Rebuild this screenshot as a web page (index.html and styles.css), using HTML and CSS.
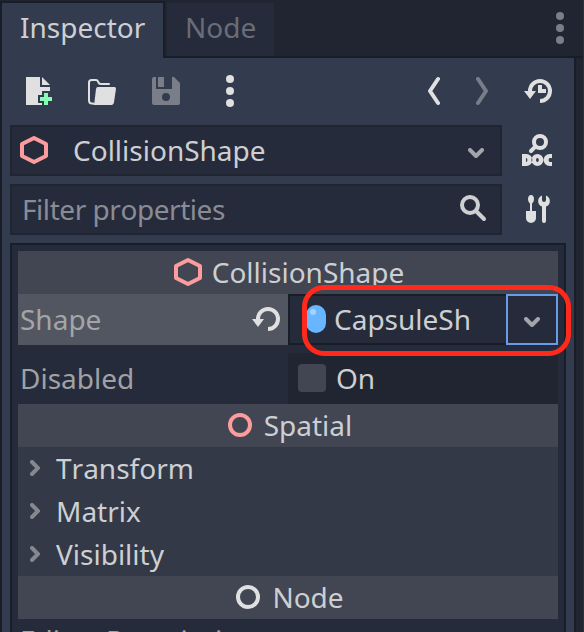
FILE: index.html
```html
<!DOCTYPE html>
<html lang="en">
<head>
<meta charset="utf-8">
<title>Inspector</title>
<link rel="stylesheet" href="styles.css">
</head>
<body>
<div class="dock">
  <header class="tabs">
    <div class="tab active">Inspector</div>
    <div class="tab">Node</div>
    <svg class="tabs-menu" viewBox="0 0 8 32"><circle cx="4" cy="4" r="4"/><circle cx="4" cy="16" r="4"/><circle cx="4" cy="28" r="4"/></svg>
  </header>
  <main class="panel">
    <div class="toolbar">
      <svg class="icon new" viewBox="0 0 16 16"><path d="M1 1h7v5h5v2H9v2H7v4h2v1H1zM9 1l4 4H9z"/><path class="plus" d="M10 9h2v2h2v2h-2v2h-2v-2H8v-2h2z"/></svg>
      <svg class="icon open" viewBox="0 0 16 16"><path class="line" d="M3.6 14.2H2.900Q1.500 14.200 1.500 12.600V3.800Q1.500 2.500 2.800 2.500H4.800Q5.800 2.500 6.100 3.400Q6.400 4.500 7.300 4.500H11.500"/><path d="M6 6h8.200q.9 0 .8.9l-1 6.700q-.2 1.400-1.600 1.400H3.200q.9-.3 1-1.300l.8-6.700q.1-1 1-1z"/></svg>
      <svg class="icon save" viewBox="0 0 16 16"><path fill-rule="evenodd" d="M2 1h1v6h8V1h1l3 3v10q0 1-1 1H2q-1 0-1-1V2q0-1 1-1zM8 9a2 2 0 1 0 0 4 2 2 0 0 0 0-4z"/><path d="M4 1h3v5H4z"/></svg>
      <svg class="dots" viewBox="0 0 8 32"><circle cx="4" cy="4" r="4"/><circle cx="4" cy="16" r="4"/><circle cx="4" cy="28" r="4"/></svg>
      <svg class="nav back" viewBox="0 0 12 32"><path d="M10 4 2 16l8 12"/></svg>
      <svg class="nav forward" viewBox="0 0 12 32"><path d="m2 4 8 12-8 12"/></svg>
      <svg class="icon history" viewBox="0 0 16 16"><path class="arc" d="M4 8a5 5 0 1 1 5 5"/><path d="M1 8h6l-3 4zM8 5h2v2h2v2H8z"/></svg>
    </div>
    <div class="line-row">
      <div class="field">
        <svg class="icon hex" viewBox="0 0 16 16"><path d="M8 2l6 3v6l-6 3-6-3V5z"/></svg>
        <span class="object-name">CollisionShape</span>
        <svg class="chevron" viewBox="0 0 16 10"><path d="m2 2 6 6 6-6"/></svg>
      </div>
      <svg class="icon docs" viewBox="0 0 16 16"><circle class="ring" cx="9.500" cy="4" r="3"/><path class="arc" d="M7.300 6.200 5 8.500"/><path fill-rule="evenodd" d="M.5 10H2.700a3 3 0 0 1 0 6H.5zM2.500 12v2a.7 1 0 0 0 0-2zM8.200 10a3 3 0 0 1 0 6 3 3 0 0 1 0-6zM8.200 12a.7 1 0 0 0 0 2 .7 1 0 0 0 0-2zM15.500 10v2h-1a.7 1 0 0 0 0 2h1v2h-1.200a3 3 0 0 1 0-6z"/></svg>
    </div>
    <div class="line-row">
      <div class="field filter">
        <span class="placeholder">Filter properties</span>
        <svg class="icon search" viewBox="0 0 16 16"><circle class="ring" cx="6" cy="6" r="4"/><path class="arc" d="m9 9 4 4"/></svg>
      </div>
      <svg class="icon tools" viewBox="0 0 16 16"><path d="M3.500 1C4.500 1 5 2 5 3S4.500 5 4 5.200V9H6v3.500a2.500 2.500 0 0 1-5 0V9h2V5.200C2.500 5 2 4 2 3S2.500 1 3.500 1z"/><path d="M9 1.200v2.300a1 1 0 0 0 2 0V1.200a3 3 0 0 1 0 5.600V14a1 1 0 0 1-2 0V6.800a3 3 0 0 1 0-5.600z"/></svg>
    </div>
    <section class="inspector">
      <div class="category"><svg class="icon hex" viewBox="0 0 16 16"><path d="M8 2l6 3v6l-6 3-6-3V5z"/></svg><span>CollisionShape</span></div>
      <div class="property selected">
        <div class="label"><span>Shape</span><svg class="icon revert" viewBox="0 0 16 16"><path class="arc" d="M4 8a5 5 0 1 1 5 5"/><path d="M1 8h6l-3 4z"/></svg></div>
        <div class="resource">
          <svg class="capsule" viewBox="0 0 20 28"><rect width="20" height="28" rx="10"/><circle cx="7" cy="7" r="3"/></svg>
          <span>CapsuleSh</span>
          <div class="dropdown"><svg class="chevron" viewBox="0 0 16 10"><path d="m2 2 6 6 6-6"/></svg></div>
          <div class="highlight"></div>
        </div>
      </div>
      <div class="property">
        <div class="label"><span>Disabled</span></div>
        <div class="toggle"><i class="checkbox"></i><span>On</span></div>
      </div>
      <div class="category"><svg class="node-ring spatial" viewBox="0 0 24 24"><circle cx="12" cy="12" r="10"/></svg><span>Spatial</span></div>
      <div class="group"><svg viewBox="0 0 10 16"><path d="m2 2 6 6-6 6"/></svg>Transform</div>
      <div class="group"><svg viewBox="0 0 10 16"><path d="m2 2 6 6-6 6"/></svg>Matrix</div>
      <div class="group"><svg viewBox="0 0 10 16"><path d="m2 2 6 6-6 6"/></svg>Visibility</div>
      <div class="category"><svg class="node-ring" viewBox="0 0 24 24"><circle cx="12" cy="12" r="10"/></svg><span>Node</span></div>
      <div class="description">Editor Description</div>
    </section>
  </main>
</div>
</body>
</html>
```

FILE: styles.css
```css
* { box-sizing: border-box; }
body {
  margin: 0;
  height: 632px;
  overflow: hidden;
  background: #202531;
  color: #cdcfd2;
  font: 28px "Noto Sans", sans-serif;
  font-kerning: none;
  white-space: nowrap;
}
svg { display: block; flex: none; fill: #e0e0e0; }
.dock { height: 632px; display: flex; flex-direction: column; border-right: 1px solid #2c303b; }
.tabs { display: flex; height: 58px; padding-top: 1px; flex: none; box-shadow: inset 0 -2px #191d27; }
.tab { height: 53px; margin: 2px 0 0 2px; padding: 0 18px; line-height: 48px; background: #262b3b; color: #696d77; }
.tab.active { width: 165px; height: 57px; margin: 0; line-height: 48px; background: #333b4f; color: #cdcfd2; border: solid #191d27; border-width: 2px 2px 0; }
.tabs-menu { width: 8px; height: 32px; margin: 11px 19px 0 auto; fill: #7b7e86; }
.panel { flex: 1; width: 576px; min-height: 0; padding: 0 8px; background: #333b4f; border: solid #191d27; border-width: 0 2px; overflow: hidden; }
.toolbar { display: flex; align-items: center; height: 67px; padding: 0 12px 1px 14px; }
.icon { width: 32px; height: 32px; }
.plus { fill: #84ffb1; }
.open { margin-left: 30px; }
.line, .arc, .ring { fill: none; stroke: #e0e0e0; stroke-width: 1; stroke-linecap: round; }
.arc, .ring { stroke-width: 2; }
.history .arc, .revert .arc { stroke-linecap: butt; }
.save { margin-left: 32px; fill: #7a7e89; }
.dots { width: 8px; height: 32px; margin-left: 44px; }
.nav { width: 12px; height: 32px; fill: none; stroke: #e0e0e0; stroke-width: 4; stroke-linecap: round; stroke-linejoin: round; }
.back { margin-left: auto; }
.forward { margin-left: 36px; stroke: #787d89; }
.history { margin-left: 34px; }
.line-row { display: flex; height: 51px; margin-bottom: 8px; }
.field { display: flex; align-items: center; width: 492px; height: 51px; padding: 0 16px 0 6px; line-height: 46px; background: #262b3b; border: 2px solid #202531; }
.field span { padding-bottom: 1px; }
.field .hex { margin-bottom: 1px; }
.hex { fill: none; stroke: #fc9c9c; stroke-width: 2; stroke-linejoin: round; }
.object-name { margin-left: 23px; }
.chevron { width: 16px; height: 10px; fill: none; stroke: #a3a5ab; stroke-width: 4; stroke-linecap: round; stroke-linejoin: round; }
.field .chevron { margin: 5px 0 0 auto; }
.filter { padding: 0 10px; }
.placeholder { color: #898c94; letter-spacing: -0.45px; }
.search { margin: 0 0 1px auto; }
.search .ring, .search .arc { stroke: #cdcfd2; }
.docs { margin: 9px 0 0 19px; }
.tools { margin: 9px 0 0 22px; }
.inspector { height: 420px; padding: 6px; background: #262b3b; border: 2px solid #191d27; }
.category { display: flex; align-items: center; justify-content: center; gap: 8px; height: 43px; line-height: 43px; background: #414652; }
.category .hex { margin: 0 0 1px; }
.property { display: flex; height: 51px; line-height: 51px; margin-bottom: 8px; }
.property:nth-child(3) { margin-bottom: 0; }
.label { display: flex; align-items: center; justify-content: space-between; width: 270px; padding: 0 6px 0 2px; color: #a0a1a4; }
.selected .label { background: #525661; color: #a3a5a8; }
.revert { margin-bottom: 1px; }
.resource { position: relative; display: flex; align-items: center; width: 270px; padding-left: 16px; background: #262b3b; border: 2px solid #191d27; border-right: 0; }
.capsule { width: 20px; height: 28px; margin: 0 8px 1px 0; fill: #68b6ff; }
.capsule circle { fill: #a4d3ff; }
.dropdown { display: flex; align-items: center; justify-content: center; width: 52px; height: 51px; margin: -2px 0 -2px auto; border: 2px solid #699ce8; }
.dropdown .chevron { margin-top: 5px; }
.highlight { position: absolute; left: 12px; top: -11px; width: 269px; height: 71px; border: 5px solid #ff2a1c; border-radius: 22px; }
.toggle { display: flex; align-items: center; width: 270px; padding-left: 10px; gap: 10px; background: #202531; }
.checkbox { width: 28px; height: 28px; margin-bottom: 1px; border-radius: 4px; background: #414652; }
.node-ring { width: 24px; height: 24px; margin: 0 4px 1px; fill: none; stroke: #e0e0e0; stroke-width: 4; }
.spatial { stroke: #fc9c9c; }
.group { display: flex; align-items: center; gap: 16px; height: 43px; padding-left: 12px; line-height: 43px; background: #333947; }
.group svg { width: 10px; height: 16px; margin-bottom: 1px; fill: none; stroke: #84888f; stroke-width: 4; stroke-linecap: round; }
.description { height: 51px; padding-left: 2px; line-height: 43px; color: #a0a1a4; }
```
